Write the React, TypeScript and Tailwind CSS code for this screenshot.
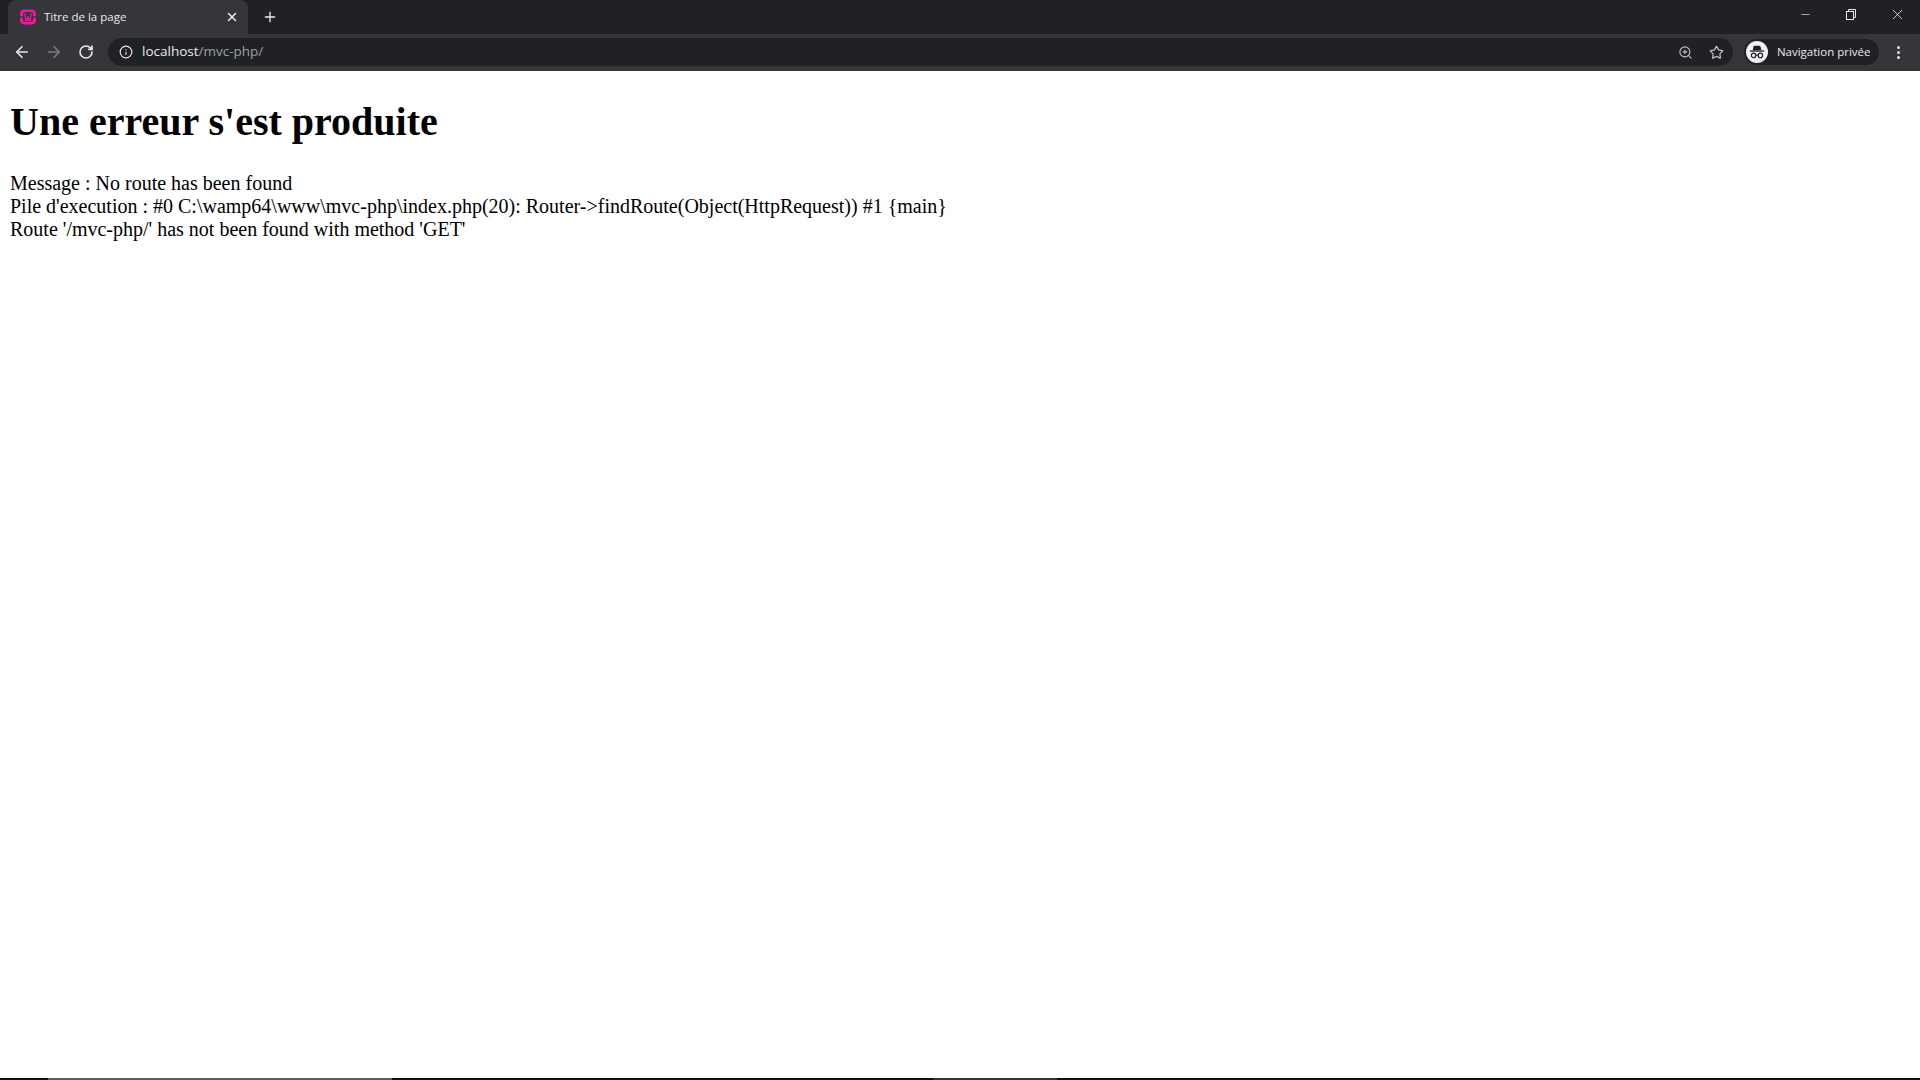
import React from 'react';
import { ArrowLeft, ArrowRight, RotateCw, Info, ZoomIn, Star, Plus, X, Minus } from 'lucide-react';

const Favicon = () => (
    <svg width="16" height="16" viewBox="0 0 16 16">
        <rect x="0" y="0.5" width="16" height="15" rx="4.5" fill="#f5129f" />
        <rect x="3" y="3" width="10" height="10" rx="2.5" fill="#35363a" />
        <path d="M0 7.2h3v1.6H0zM13 7.2h3v1.6h-3z" fill="#35363a" />
        <path d="M4.8 4.4 L5.8 11.4 H7 L8 7.4 L9 11.4 H10.2 L11.2 4.4" fill="none" stroke="#f5129f" strokeWidth="1.4" />
    </svg>
);

const IncognitoIcon = () => (
    <svg width="22" height="22" viewBox="0 0 22 22">
        <circle cx="11" cy="11" r="11" fill="#f1f3f4" />
        <path d="M7.8 4.8h6.4l1.2 4.4H6.6z" fill="#202124" />
        <rect x="4" y="9.4" width="14" height="1.3" fill="#202124" />
        <circle cx="7.6" cy="14.4" r="2.2" fill="none" stroke="#202124" strokeWidth="1.2" />
        <circle cx="14.4" cy="14.4" r="2.2" fill="none" stroke="#202124" strokeWidth="1.2" />
        <path d="M9.8 14.2h2.4" stroke="#202124" strokeWidth="1.2" />
    </svg>
);

const RestoreIcon = () => (
    <svg width="10" height="11" viewBox="0 0 10 11" fill="none" stroke="#e8eaed" strokeWidth="1">
        <rect x="0.5" y="2.5" width="7" height="8" />
        <path d="M2.5 2.5V0.5h7v8H7.5" />
    </svg>
);

export default function App() {
    return (
        <div className="h-[1080px] w-[1920px] flex flex-col overflow-hidden bg-white font-['Liberation_Serif',serif]">
            {/* Tab strip */}
            <div className="h-[34px] flex items-end bg-[#202124] font-['Open_Sans',sans-serif] text-[#e8eaed]">
                <div className="ml-2 h-[34px] w-[240px] flex items-center gap-2 rounded-t-lg bg-[#35363a] pl-3 pr-[9px]">
                    <Favicon />
                    <span className="flex-1 text-[11.5px] leading-none">Titre de la page</span>
                    <X size={14} strokeWidth={2.5} />
                </div>
                <div className="ml-[14px] h-[34px] flex items-center">
                    <Plus size={16} strokeWidth={2} />
                </div>
                <div className="ml-auto h-[28px] self-start flex items-center">
                    <div className="w-[46px] flex justify-center"><Minus size={13} strokeWidth={1.2} /></div>
                    <div className="w-[46px] flex justify-center"><RestoreIcon /></div>
                    <div className="w-[46px] flex justify-center"><X size={17} strokeWidth={1.2} /></div>
                </div>
            </div>

            {/* Address bar */}
            <div className="h-[37px] flex items-center gap-[14.5px] bg-[#35363a] pb-px pl-[12.5px] pr-4 font-['Open_Sans',sans-serif]">
                <ArrowLeft size={18} strokeWidth={2.2} className="text-[#e8eaed]" />
                <ArrowRight size={18} strokeWidth={2.2} className="text-[#7b7c7e]" />
                <RotateCw size={16} strokeWidth={2.4} className="text-[#e8eaed]" />
                <div className="h-7 flex-1 flex items-center rounded-full bg-[#202124] pl-[11px] pr-[9px]">
                    <Info size={14} strokeWidth={2} className="text-[#e8eaed]" />
                    <span className="ml-[9px] flex-1 text-[13.5px] leading-none text-[#9aa0a6]"><span className="text-[#e8eaed]">localhost</span>/mvc-php/</span>
                    <ZoomIn size={15} strokeWidth={1.8} className="text-[#bdc1c6]" />
                    <Star size={15} strokeWidth={2} className="ml-4 text-[#bdc1c6]" />
                </div>
                <div className="h-[26px] flex items-center rounded-full bg-[#202124] pl-0.5 pr-2 -ml-1">
                    <IncognitoIcon />
                    <span className="ml-[9px] text-[11.5px] leading-none text-[#e8eaed]">Navigation privée</span>
                </div>
                <div className="flex flex-col gap-[2px] px-1">
                    <span className="size-[3px] rounded-full bg-[#e8eaed]" />
                    <span className="size-[3px] rounded-full bg-[#e8eaed]" />
                    <span className="size-[3px] rounded-full bg-[#e8eaed]" />
                </div>
            </div>

            {/* Page body */}
            <div className="flex-1 p-[10px] text-black">
                <h1 className="mt-[18px] mb-[27px] text-[40px] leading-[46px] font-bold">Une erreur s'est produite</h1>
                <p className="text-[20px] leading-[23px]">Message : No route has been found</p>
                <p className="text-[20px] leading-[23px]">Pile d'execution : #0 C:\wamp64\www\mvc-php\index.php(20): Router-&gt;findRoute(Object(HttpRequest)) #1 {'{main}'}</p>
                <p className="text-[20px] leading-[23px]">Route '/mvc-php/' has not been found with method 'GET'</p>
            </div>

            {/* Taskbar sliver */}
            <div className="h-0.5 flex bg-[#101010]">
                <div className="ml-[48px] w-[344px] bg-[#5f5f5f]" />
                <div className="ml-[541px] w-[124px] bg-[#333333]" />
            </div>
        </div>
    );
}
